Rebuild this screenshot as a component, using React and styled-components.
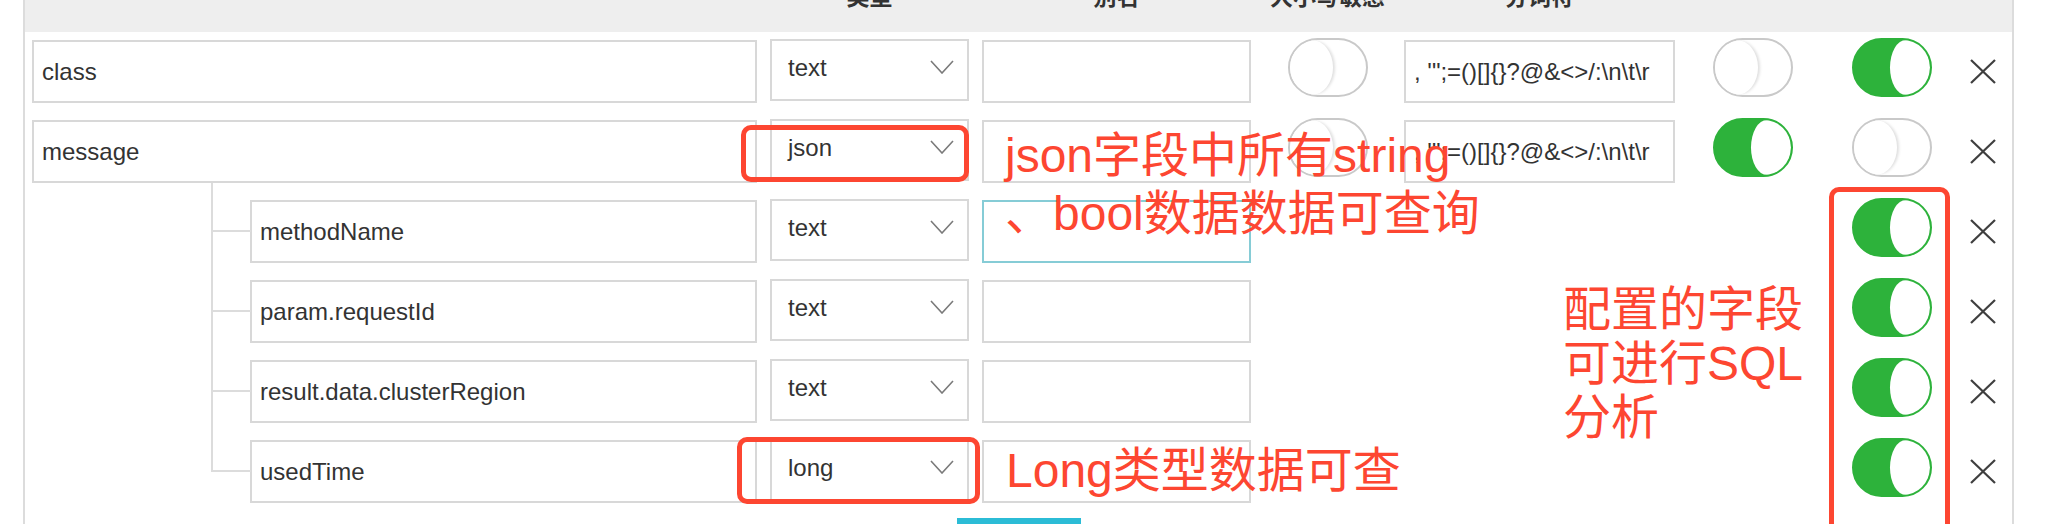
import React from "react";
import styled, { createGlobalStyle } from "styled-components";

const Global = createGlobalStyle`
  html, body {
    margin: 0;
    padding: 0;
    background: #fff;
    overflow: hidden;
    font-family: "Liberation Sans", "Noto Sans CJK SC", sans-serif;
  }
  * { box-sizing: border-box; }
`;

const RED = "#fd4631";
const COLS = "725px 212px 282px 153px 271px 155px 124px 58px";

const Page = styled.div`
  position: relative;
  width: 2054px;
  height: 524px;
  overflow: hidden;
`;

const Panel = styled.div`
  margin-left: 23px;
  width: 1991px;
  min-height: 524px;
  border-left: 2px solid #dcdcdc;
  border-right: 2px solid #dcdcdc;
`;

const Header = styled.div`
  height: 32px;
  background: #eeeeee;
  display: grid;
  grid-template-columns: ${COLS};
  padding-left: 7px;
  align-items: start;
`;

const HeadLabel = styled.div`
  grid-column: ${(p) => p.$col};
  justify-self: ${(p) => p.$justify || "center"};
  width: ${(p) => p.$w || "auto"};
  text-align: center;
  font-size: 23px;
  line-height: 23px;
  font-weight: bold;
  color: #333;
  margin-top: -14px;
`;

const Body = styled.div`
  padding: 8px 0 0 7px;
  display: flex;
  flex-direction: column;
  gap: 17px;
`;

const Row = styled.div`
  display: grid;
  grid-template-columns: ${COLS};
  align-items: center;
  height: 63px;
`;

const NameCell = styled.div`
  position: relative;
  height: 63px;
  padding-left: ${(p) => (p.$child ? "218px" : "0")};

  ${(p) =>
    p.$child &&
    `
    &::before {
      content: "";
      position: absolute;
      left: 179px;
      top: -17px;
      width: 2px;
      height: ${p.$last ? "49px" : "80px"};
      background: #dcdcdc;
    }
    &::after {
      content: "";
      position: absolute;
      left: 179px;
      top: 30px;
      width: 40px;
      height: 2px;
      background: #dcdcdc;
    }
  `}
`;

const Field = styled.div`
  height: 63px;
  width: ${(p) => p.$w || "100%"};
  justify-self: ${(p) => p.$justify || "stretch"};
  border: 2px solid ${(p) => (p.$focus ? "#86ccd6" : "#d8d8d8")};
  background: #fff;
  display: flex;
  align-items: center;
  padding-left: 8px;
  font-size: 24px;
  color: #333;
  white-space: nowrap;
  overflow: hidden;
`;

const Select = styled.div`
  height: 62px;
  width: 199px;
  justify-self: end;
  align-self: start;
  margin-top: -1px;
  border: 2px solid #d8d8d8;
  background: #fff;
  display: flex;
  align-items: center;
  justify-content: space-between;
  padding: 0 13px 4px 16px;
  font-size: 24px;
  color: #333;
`;

const Chevron = styled.svg`
  width: 24px;
  height: 14px;
  margin-top: -2px;
`;

const Track = styled.div`
  justify-self: center;
  align-self: start;
  margin-top: -2px;
  width: 80px;
  height: 59px;
  border-radius: 30px;
  border: 2px solid ${(p) => (p.$on ? "#2db23b" : "#c9c9c9")};
  background: ${(p) => (p.$on ? "#2db23b" : "#fff")};
  display: flex;
  justify-content: ${(p) => (p.$on ? "flex-end" : "flex-start")};
  overflow: hidden;
`;

const Knob = styled.div`
  width: ${(p) => (p.$on ? "40px" : "43px")};
  height: 100%;
  background: #fff;
  border-radius: ${(p) => (p.$on ? "40% 50% 50% 40% / 50%" : "50%")};
  box-shadow: ${(p) =>
    p.$on ? "none" : "3px 0 3px -1px rgba(0, 0, 0, 0.13)"};
`;

const CloseBtn = styled.svg`
  justify-self: center;
  width: 26px;
  height: 25px;
`;

const Empty = styled.div``;

const Footer = styled.div`
  display: flex;
  justify-content: center;
  padding-top: 15px;
`;

const Button = styled.div`
  width: 124px;
  height: 40px;
  background: #2bbcd6;
`;

const Box = styled.div`
  position: absolute;
  left: ${(p) => p.$x}px;
  top: ${(p) => p.$y}px;
  width: ${(p) => p.$w}px;
  height: ${(p) => p.$h}px;
  border: 5px solid ${RED};
  border-radius: 10px;
  pointer-events: none;
`;

const Note = styled.div`
  position: absolute;
  left: ${(p) => p.$x}px;
  top: ${(p) => p.$y}px;
  font-size: 48px;
  line-height: ${(p) => p.$lh || 58}px;
  color: ${RED};
  white-space: nowrap;
  font-family: "Liberation Sans", "Noto Sans CJK SC", sans-serif;
`;

const Toggle = ({ on }) => (
  <Track $on={on}>
    <Knob $on={on} />
  </Track>
);

const Close = () => (
  <CloseBtn viewBox="0 0 26 25">
    <line x1="1" y1="1" x2="25" y2="24" stroke="#3f3f3f" strokeWidth="2.2" />
    <line x1="25" y1="1" x2="1" y2="24" stroke="#3f3f3f" strokeWidth="2.2" />
  </CloseBtn>
);

const TOK = ", '\";=()[]{}?@&<>/:\\n\\t\\r";

const rows = [
  { name: "class", type: "text", caseOn: false, t2: false, t3: true },
  { name: "message", type: "json", caseOn: false, t2: true, t3: false },
  { name: "methodName", type: "text", child: true, focus: true, t3: true },
  { name: "param.requestId", type: "text", child: true, t3: true },
  { name: "result.data.clusterRegion", type: "text", child: true, t3: true },
  { name: "usedTime", type: "long", child: true, last: true, t3: true },
];

export default function App() {
  return (
    <Page>
      <Global />
      <Panel>
        <Header>
          <HeadLabel $col={2} $justify="end" $w="199px">类型</HeadLabel>
          <HeadLabel $col={3} $justify="end" $w="269px">别名</HeadLabel>
          <HeadLabel $col={4}>大小写敏感</HeadLabel>
          <HeadLabel $col={5}>分词符</HeadLabel>
        </Header>
        <Body>
          {rows.map((r) => (
            <Row key={r.name}>
              <NameCell $child={r.child} $last={r.last}>
                <Field>{r.name}</Field>
              </NameCell>
              <Select>
                <span>{r.type}</span>
                <Chevron viewBox="0 0 24 14">
                  <polyline
                    points="1,1 12,13 23,1"
                    fill="none"
                    stroke="#7a7a7a"
                    strokeWidth="1.6"
                  />
                </Chevron>
              </Select>
              <Field $w="269px" $justify="end" $focus={r.focus} />
              {r.child ? <Empty /> : <Toggle on={r.caseOn} />}
              {r.child ? <Empty /> : <Field>{TOK}</Field>}
              {r.child ? <Empty /> : <Toggle on={r.t2} />}
              <Toggle on={r.t3} />
              <Close />
            </Row>
          ))}
        </Body>
        <Footer>
          <Button />
        </Footer>
      </Panel>

      <Box $x={741} $y={125} $w={228} $h={57} />
      <Box $x={737} $y={437} $w={243} $h={67} />
      <Box $x={1829} $y={187} $w={121} $h={360} />

      <Note $x={1005} $y={127}>
        json字段中所有string
        <br />
        、bool数据数据可查询
      </Note>
      <Note $x={1006} $y={442}>Long类型数据可查</Note>
      <Note $x={1563} $y={283} $lh={54}>
        配置的字段
        <br />
        可进行SQL
        <br />
        分析
      </Note>
    </Page>
  );
}
